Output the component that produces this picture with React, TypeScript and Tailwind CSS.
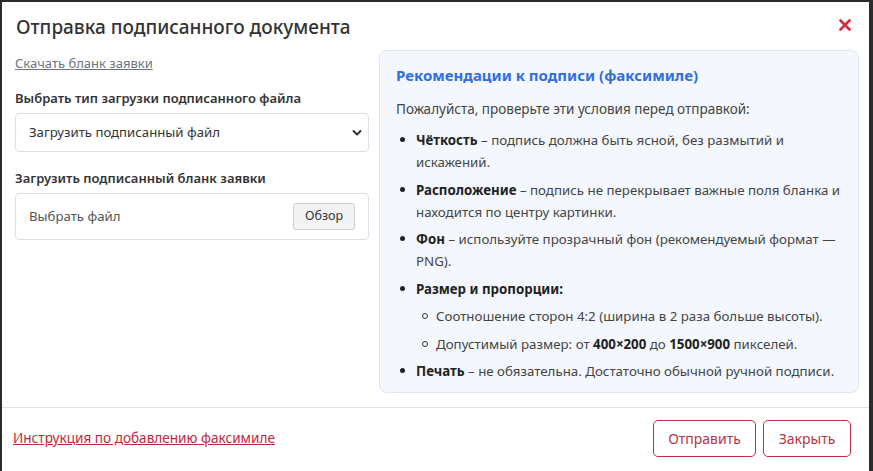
import React from "react";

const font = { fontFamily: '"Noto Sans", "Open Sans", sans-serif' };

function Bullet({ sub = false }: { sub?: boolean }) {
  return sub ? (
    <span className="absolute left-[-14px] top-[8px] w-[6px] h-[6px] rounded-full border border-[#333]" />
  ) : (
    <span className="absolute left-[-16px] top-[8px] w-[5px] h-[5px] rounded-full bg-[#222]" />
  );
}

export default function App() {
  return (
    <div className="w-[873px] h-[471px] bg-[#2b2b2b] overflow-hidden pt-[2px] pl-[2px]" style={font}>
      <div className="w-[867px] h-[469px] bg-white flex flex-col text-[#333]">
        {/* header */}
        <div className="h-[48px] flex items-center justify-between pl-[14px] pr-[15px]">
          <h1 className="text-[19px] font-medium text-[#333] leading-none pt-[3px]">Отправка подписанного документа</h1>
          <svg width="12" height="12" viewBox="0 0 12 12" className="mr-[3px] mb-[2px]">
            <path d="M1.5 1.5 L10.5 10.5 M10.5 1.5 L1.5 10.5" stroke="#d9283a" strokeWidth="2.6" strokeLinecap="round" />
          </svg>
        </div>
        {/* body */}
        <div className="flex pl-[13px] pr-[10px] h-[345px] gap-[10px]">
          <div className="w-[354px] flex flex-col pt-[4px]">
            <a className="text-[13px] leading-[18px] text-[#6c757d] underline self-start">Скачать бланк заявки</a>
            <div className="mt-[16px] text-[13px] font-semibold leading-[20px]">Выбрать тип загрузки подписанного файла</div>
            <div className="mt-[5px] h-[39px] border border-[#dcdfe3] rounded-[4px] flex items-center justify-between pl-[13px] pr-[6px]">
              <span className="text-[13.2px] text-[#333]">Загрузить подписанный файл</span>
              <svg width="10" height="8" viewBox="0 0 10 8">
                <path d="M1.5 2 L5 5.5 L8.5 2" stroke="#333" strokeWidth="2" fill="none" strokeLinecap="round" strokeLinejoin="round" />
              </svg>
            </div>
            <div className="mt-[16px] text-[13px] font-semibold leading-[20px]">Загрузить подписанный бланк заявки</div>
            <div className="mt-[5px] h-[47px] border border-[#dcdfe3] rounded-[4px] flex items-center justify-between pl-[13px] pr-[13px]">
              <span className="text-[13.2px] text-[#555]">Выбрать файл</span>
              <span className="h-[27px] w-[62px] flex items-center justify-center bg-[#f3f3f3] border border-[#cfcfcf] rounded-[3px] text-[12.5px] text-[#333]">Обзор</span>
            </div>
          </div>
          <div className="w-[480px] h-[343px] bg-[#f4f8fe] border border-[#dde6f2] rounded-[8px] pl-[16px] pr-[8px] pt-[14px]">
            <div className="text-[15px] font-bold text-[#2f6fe0] leading-[20px]">Рекомендации к подписи (факсимиле)</div>
            <p className="mt-[14px] text-[13.5px] leading-[20px] text-[#444]">Пожалуйста, проверьте эти условия перед отправкой:</p>
            <ul className="mt-[10px] pl-[20px] text-[13.3px] leading-[22px] text-[#444] flex flex-col gap-[5.5px]">
              <li className="relative">
                <Bullet />
                <b className="text-[#222]">Чёткость</b> – подпись должна быть ясной, без размытий и искажений.
              </li>
              <li className="relative">
                <Bullet />
                <b className="text-[#222]">Расположение</b> – подпись не перекрывает важные поля бланка и находится по центру картинки.
              </li>
              <li className="relative">
                <Bullet />
                <b className="text-[#222]">Фон</b> – используйте прозрачный фон (рекомендуемый формат — PNG).
              </li>
              <li className="relative">
                <Bullet />
                <b className="text-[#222]">Размер и пропорции:</b>
                <ul className="mt-[5.5px] pl-[20px] flex flex-col gap-[5.5px]">
                  <li className="relative">
                    <Bullet sub />
                    Соотношение сторон 4:2 (ширина в 2 раза больше высоты).
                  </li>
                  <li className="relative">
                    <Bullet sub />
                    Допустимый размер: от <b className="text-[#222]">400×200</b> до <b className="text-[#222]">1500×900</b> пикселей.
                  </li>
                </ul>
              </li>
              <li className="relative">
                <Bullet />
                <b className="text-[#222]">Печать</b> – не обязательна. Достаточно обычной ручной подписи.
              </li>
            </ul>
          </div>
        </div>
        {/* footer */}
        <div className="mt-[12px] border-t border-[#dee2e6] flex items-start justify-between pl-[11px] pr-[18px] pt-[12px]">
          <a className="mt-[8px] text-[13.6px] leading-[20px] text-[#c4273a] underline">Инструкция по добавлению факсимиле</a>
          <div className="flex gap-[7px]">
            <button className="h-[37px] w-[103px] border border-[#b8343f] rounded-[5px] text-[14px] text-[#b8343f]">Отправить</button>
            <button className="h-[37px] w-[88px] border border-[#b8343f] rounded-[5px] text-[14px] text-[#b8343f]">Закрыть</button>
          </div>
        </div>
      </div>
    </div>
  );
}
